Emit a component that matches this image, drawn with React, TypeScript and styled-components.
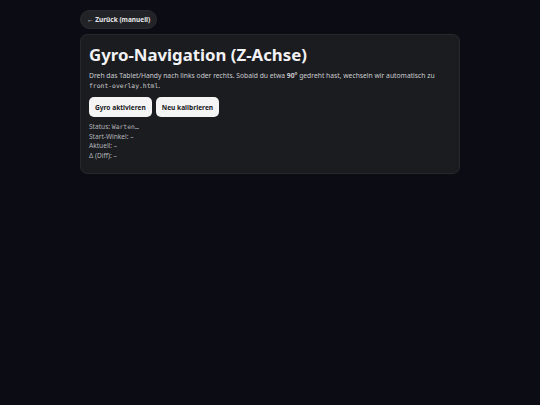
import styled, { createGlobalStyle } from "styled-components"

const GlobalStyle = createGlobalStyle`
  body {
    margin: 0;
    background: #0b0c14;
    color: #e6e7ea;
    font-family: "Noto Sans", "Open Sans", sans-serif;
  }
`

const Page = styled.div`
  width: 380px;
  margin: 0 auto;
  padding-top: 10px;
  display: flex;
  flex-direction: column;
  align-items: flex-start;
  gap: 5px;
`

const BackButton = styled.button`
  height: 19px;
  padding: 0 6px;
  border: 1px solid #2a2b30;
  border-radius: 10px;
  background: #222327;
  color: #e8e8ea;
  font-family: inherit;
  font-size: 6.5px;
  font-weight: 700;
`

const Card = styled.section`
  box-sizing: border-box;
  width: 100%;
  height: 140px;
  padding: 8px 8px;
  border: 1px solid #26272b;
  border-radius: 7px;
  background: #1b1c1f;
`

const Title = styled.h1`
  margin: 0 0 4px;
  font-size: 16.8px;
  font-weight: 700;
  line-height: 24px;
  color: #f2f2f4;
`

const Text = styled.p`
  margin: 0 0 6px;
  font-size: 6.75px;
  line-height: 10px;
  color: #c9cbd0;
`

const Code = styled.code`
  font-family: "DejaVu Sans Mono", monospace;
  font-size: 6.4px;
  line-height: 0;
`

const Actions = styled.div`
  display: flex;
  gap: 4px;
  margin-bottom: 5px;
`

const Button = styled.button`
  height: 20px;
  padding: 0 6px;
  border: none;
  border-radius: 5px;
  background: #f4f4f5;
  color: #17181b;
  font-family: inherit;
  font-size: 6.6px;
  font-weight: 700;
`

const Line = styled.div`
  font-size: 6.6px;
  line-height: 9.7px;
  height: 9.7px;
  color: #b4b6bc;
`

const App = () => (
  <>
    <GlobalStyle />
    <Page>
      <BackButton>← Zurück (manuell)</BackButton>
      <Card>
        <Title>Gyro-Navigation (Z-Achse)</Title>
        <Text>
          Dreh das Tablet/Handy nach links oder rechts. Sobald du etwa <b>90°</b> gedreht hast,
          wechseln wir automatisch zu <Code>front-overlay.html</Code>.
        </Text>
        <Actions>
          <Button>Gyro aktivieren</Button>
          <Button>Neu kalibrieren</Button>
        </Actions>
        <Line>Status: <Code>Warten…</Code></Line>
        <Line>Start-Winkel: –</Line>
        <Line>Aktuell: –</Line>
        <Line>Δ (Diff): –</Line>
      </Card>
    </Page>
  </>
)

export default App
